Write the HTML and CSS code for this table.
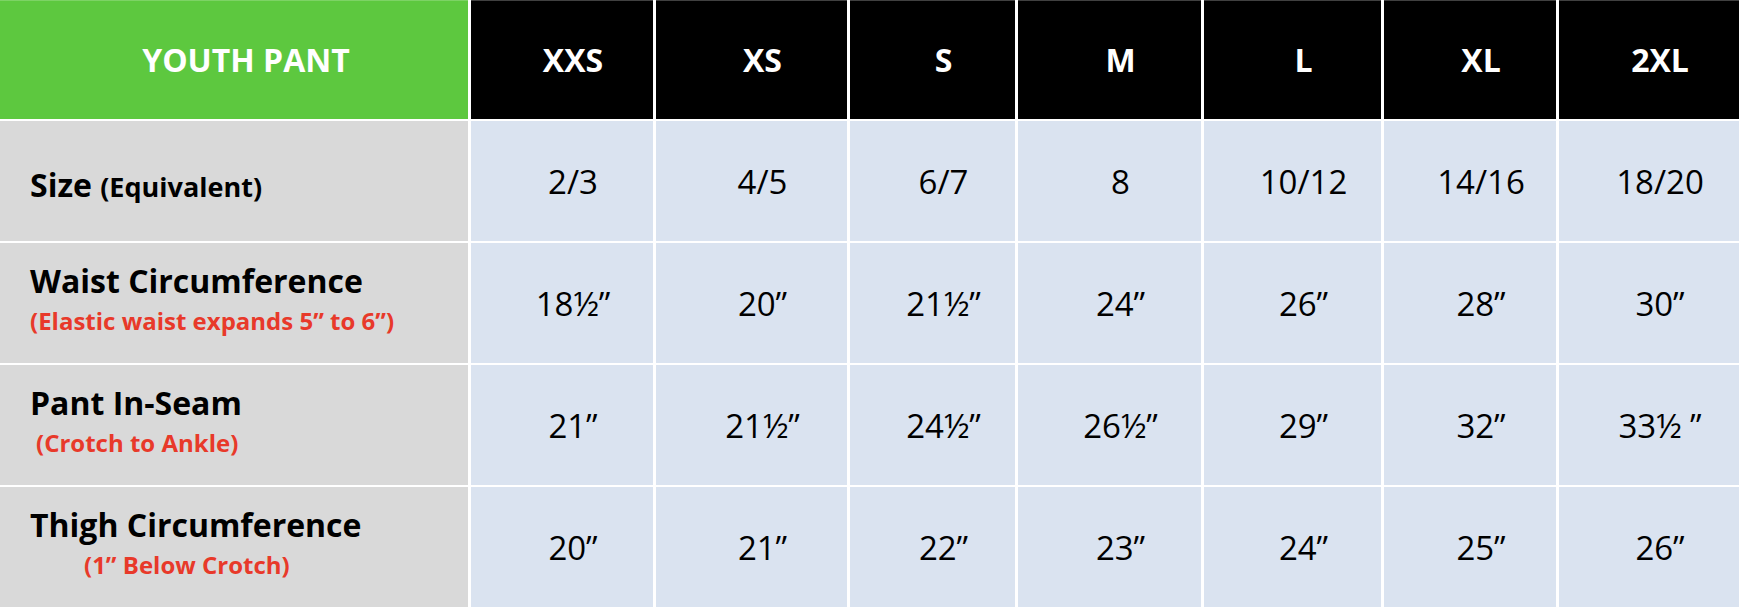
FILE: index.html
```html
<!DOCTYPE html>
<html lang="en">
<head>
<meta charset="utf-8">
<title>Youth Pant Size Chart</title>
<link rel="stylesheet" href="styles.css">
</head>
<body>
<div class="chart">
  <div class="cell head title">YOUTH PANT</div>
  <div class="cell head">XXS</div>
  <div class="cell head">XS</div>
  <div class="cell head">S</div>
  <div class="cell head">M</div>
  <div class="cell head">L</div>
  <div class="cell head">XL</div>
  <div class="cell head">2XL</div>

  <div class="cell label single"><div class="main">Size <span class="eq">(Equivalent)</span></div></div>
  <div class="cell val">2/3</div>
  <div class="cell val">4/5</div>
  <div class="cell val">6/7</div>
  <div class="cell val">8</div>
  <div class="cell val">10/12</div>
  <div class="cell val">14/16</div>
  <div class="cell val">18/20</div>

  <div class="cell label"><div class="main">Waist Circumference</div><div class="sub">(Elastic waist expands 5” to 6”)</div></div>
  <div class="cell val">18½”</div>
  <div class="cell val">20”</div>
  <div class="cell val">21½”</div>
  <div class="cell val">24”</div>
  <div class="cell val">26”</div>
  <div class="cell val">28”</div>
  <div class="cell val">30”</div>

  <div class="cell label"><div class="main">Pant In-Seam</div><div class="sub indent-s">(Crotch to Ankle)</div></div>
  <div class="cell val">21”</div>
  <div class="cell val">21½”</div>
  <div class="cell val">24½”</div>
  <div class="cell val">26½”</div>
  <div class="cell val">29”</div>
  <div class="cell val">32”</div>
  <div class="cell val">33½ ”</div>

  <div class="cell label"><div class="main">Thigh Circumference</div><div class="sub indent-l">(1” Below Crotch)</div></div>
  <div class="cell val">20”</div>
  <div class="cell val">21”</div>
  <div class="cell val">22”</div>
  <div class="cell val">23”</div>
  <div class="cell val">24”</div>
  <div class="cell val">25”</div>
  <div class="cell val">26”</div>
</div>
</body>
</html>
```
FILE: styles.css
```css
html, body {
  margin: 0;
  padding: 0;
  background: #ffffff;
}

body {
  font-family: "Open Sans", "Noto Sans", sans-serif;
  width: 1742px;
  height: 610px;
  overflow: hidden;
}

.chart {
  display: grid;
  grid-template-columns: 468px 182px 191px 165px 183px 177px 172px 180px;
  grid-template-rows: 119px 120px 120px 120px 120px;
  column-gap: 3px;
  row-gap: 2px;
  background: #ffffff;
}

.cell {
  display: flex;
  align-items: center;
  justify-content: center;
  box-sizing: border-box;
}

.head {
  background: #000000;
  color: #ffffff;
  font-weight: 700;
  font-size: 32px;
  padding-left: 22px;
  box-shadow: inset 0 1px 0 rgba(255, 255, 255, 0.25);
}

.head.title {
  background: #5dc83f;
  padding-left: 24px;
  box-shadow: inset 0 1px 0 rgba(255, 255, 255, 0.2);
}

.val {
  background: #dae3f0;
  color: #000000;
  font-size: 33px;
  font-weight: 400;
  padding-left: 22px;
}

.label {
  background: #d9d9d9;
  color: #000000;
  flex-direction: column;
  align-items: flex-start;
  justify-content: center;
  padding-left: 30px;
  padding-bottom: 8px;
}

.label.single {
  padding-bottom: 0;
  padding-top: 8px;
}

.main {
  font-size: 32px;
  font-weight: 700;
  line-height: 35px;
  white-space: nowrap;
}

.eq {
  font-size: 27px;
}

.sub {
  color: #e8392a;
  font-size: 24px;
  font-weight: 700;
  line-height: 30px;
  margin-top: 8px;
  white-space: nowrap;
}

.indent-s {
  padding-left: 6px;
}

.indent-l {
  padding-left: 54px;
}
```
